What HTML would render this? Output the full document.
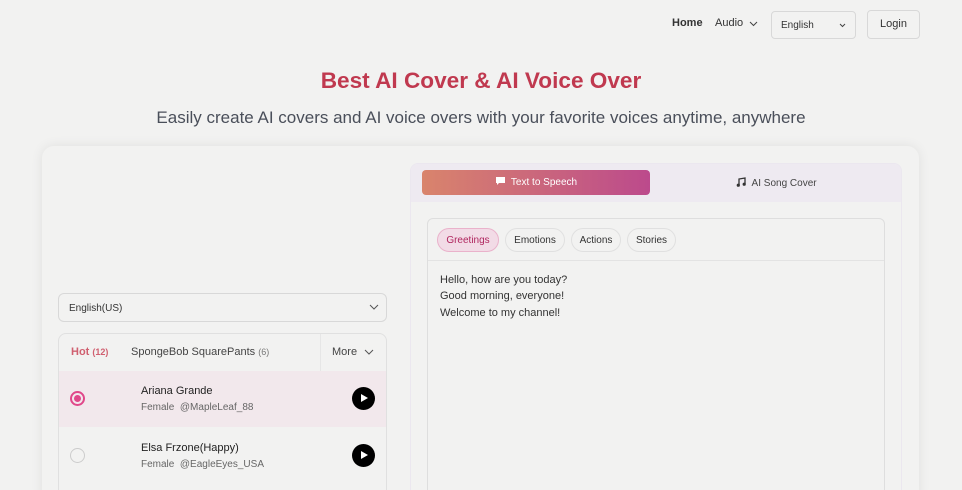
<!DOCTYPE html>
<html><head><meta charset="utf-8"><style>
*{box-sizing:border-box;margin:0;padding:0}
html,body{width:962px;height:490px;overflow:hidden}
body{background:#f2f2f1;font-family:"Liberation Sans",sans-serif;color:#333;position:relative}
.abs{position:absolute}
.nav a{position:absolute;font-size:11px;color:#333}
.sel{border:1px solid #d8d8d8;border-radius:4px;background:#f2f2f1}
h1{position:absolute;left:0;width:962px;top:68px;text-align:center;font-size:22.6px;color:#c0394f;font-weight:bold}
.sub{position:absolute;left:0;width:962px;top:108px;text-align:center;font-size:17px;color:#4a4f5a}
.card{left:42px;top:146px;width:877px;height:360px;border-radius:12px;background:#f2f2f1;box-shadow:0 0 12px rgba(0,0,0,.08)}
.chip{position:absolute;top:228px;height:24px;border:1px solid #e0e0e0;border-radius:12px;font-size:10px;line-height:24px;text-align:center;color:#333}
.row{position:absolute;left:59px;width:327px;height:56px}
.name{position:absolute;left:82px;font-size:11px;color:#222}
.meta{position:absolute;left:82px;font-size:10px;color:#666}
.play{position:absolute;left:293px;top:16px;width:23px;height:23px;border-radius:50%;background:#000}
.play:after{content:"";position:absolute;left:9px;top:7px;border-left:7px solid #fff;border-top:4.5px solid transparent;border-bottom:4.5px solid transparent}
</style></head><body>
<div class="nav">
<a style="left:672px;top:17px;font-weight:bold">Home</a>
<a style="left:715px;top:17px">Audio</a>
</div>
<svg class="abs" style="left:749px;top:21px" width="9" height="6"><path d="M1 1l3.5 3.5L8 1" stroke="#444" fill="none"/></svg>
<div class="abs sel" style="left:771px;top:11px;width:85px;height:28px;font-size:10px;padding:8px 0 0 9px">English<svg style="position:absolute;right:9px;top:11px" width="7" height="5"><path d="M1 1l2.5 2.5L6 1" stroke="#444" fill="none"/></svg></div>
<div class="abs sel" style="left:867px;top:10px;width:53px;height:29px;font-size:11px;text-align:center;line-height:27px">Login</div>
<h1>Best AI Cover &amp; AI Voice Over</h1>
<div class="sub">Easily create AI covers and AI voice overs with your favorite voices anytime, anywhere</div>
<div class="abs card"></div>
<div class="abs sel" style="left:58px;top:293px;width:329px;height:29px;border-radius:6px;font-size:10px;padding:9px 0 0 10px">English(US)<svg style="position:absolute;right:7px;top:10px" width="10" height="7"><path d="M1 1l4 4 4-4" stroke="#555" fill="none"/></svg></div>
<div class="abs" style="left:58px;top:333px;width:329px;height:170px;border:1px solid #e0e0e0;border-radius:8px"></div>
<div class="abs" style="left:71px;top:346px;font-size:11px;color:#d06070;font-weight:bold">Hot <span style="font-size:9px">(12)</span></div>
<div class="abs" style="left:131px;top:346px;font-size:11px;color:#444">SpongeBob SquarePants <span style="font-size:9px;color:#777">(6)</span></div>
<div class="abs" style="left:320px;top:334px;width:1px;height:37px;background:#e6e6e6"></div>
<div class="abs" style="left:332px;top:346px;font-size:11px;color:#444">More</div>
<svg class="abs" style="left:364px;top:349px" width="10" height="7"><path d="M1 1l4 4 4-4" stroke="#555" fill="none"/></svg>
<div class="row" style="top:371px;background:#f2e8ec">
<div class="abs" style="left:11px;top:20px;width:15px;height:15px;border-radius:50%;border:2px solid #e0488a"><div style="margin:2px;width:7px;height:7px;border-radius:50%;background:#e0488a"></div></div>
<div class="name" style="top:14px">Ariana Grande</div>
<div class="meta" style="top:31px">Female &nbsp;@MapleLeaf_88</div>
<div class="play"></div></div>
<div class="row" style="top:427px">
<div class="abs" style="left:11px;top:21px;width:15px;height:15px;border-radius:50%;border:1px solid #ccc"></div>
<div class="name" style="top:15px">Elsa Frzone(Happy)</div>
<div class="meta" style="top:32px">Female &nbsp;@EagleEyes_USA</div>
<div class="play" style="top:17px"></div></div>

<div class="abs" style="left:410px;top:163px;width:492px;height:340px;border:1px solid #ebe7ef;border-radius:8px;background:#f2f2f1;overflow:hidden">
<div style="height:38px;background:#eeeaf1"></div></div>
<div class="abs" style="left:422px;top:170px;width:228px;height:25px;border-radius:4px;background:linear-gradient(90deg,#d9846c,#bc4a8c);color:#fff;font-size:10px;text-align:center;line-height:25px"><svg width="11" height="10" style="vertical-align:-1px;margin-right:5px"><path d="M1 1h9v6H4l-2 2V7H1z" fill="#fff"/></svg>Text to Speech</div>
<div class="abs" style="left:736px;top:177px;font-size:10px;color:#444"><svg width="10" height="10" style="vertical-align:-1px"><path d="M3 8V2l6-1v6" stroke="#333" stroke-width="1.3" fill="none"/><circle cx="2.3" cy="8.2" r="1.6" fill="#333"/><circle cx="8.2" cy="7.2" r="1.6" fill="#333"/></svg> &nbsp;AI Song Cover</div>
<div class="abs" style="left:427px;top:218px;width:458px;height:290px;border:1px solid #dedede;border-radius:6px"></div>
<div class="abs" style="left:428px;top:260px;width:456px;height:1px;background:#e3e3e3"></div>
<div class="chip" style="left:437px;width:62px;background:#f2dbe6;border-color:#eab2cb;color:#b0265f">Greetings</div>
<div class="chip" style="left:505px;width:60px">Emotions</div>
<div class="chip" style="left:571px;width:50px">Actions</div>
<div class="chip" style="left:627px;width:49px">Stories</div>
<div class="abs" style="left:440px;top:272px;font-size:11px;line-height:16.3px;color:#333">Hello, how are you today?<br>Good morning, everyone!<br>Welcome to my channel!</div>
</body></html>
